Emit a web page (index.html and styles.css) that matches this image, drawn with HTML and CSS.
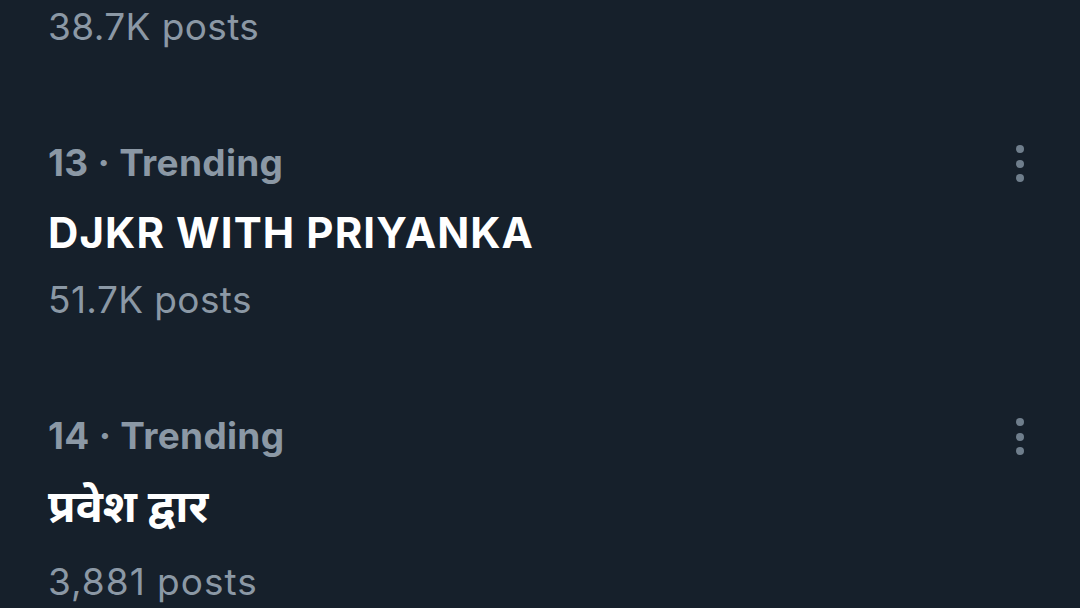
FILE: index.html
```html
<!DOCTYPE html>
<html lang="en">
<head>
<meta charset="utf-8">
<title>Trending</title>
<link rel="stylesheet" href="styles.css">
</head>
<body>
<div class="list">
  <div class="item item-partial">
    <div class="content">
      <div class="posts">38.7K posts</div>
    </div>
  </div>
  <div class="item">
    <div class="content">
      <div class="meta">13 · Trending</div>
      <div class="title">DJKR WITH PRIYANKA</div>
      <div class="posts">51.7K posts</div>
    </div>
    <div class="more"><span class="dot"></span><span class="dot"></span><span class="dot"></span></div>
  </div>
  <div class="item">
    <div class="content">
      <div class="meta">14 · Trending</div>
      <div class="title title-hi" lang="hi">प्रवेश द्वार</div>
      <div class="posts posts-wide">3,881 posts</div>
    </div>
    <div class="more"><span class="dot"></span><span class="dot"></span><span class="dot"></span></div>
  </div>
</div>
</body>
</html>
```

FILE: styles.css
```css
html, body {
  margin: 0;
  padding: 0;
  background: #16202b;
  height: 100%;
  overflow: hidden;
}
body {
  font-family: Inter, "Noto Sans", "Noto Sans Devanagari", sans-serif;
  color: #8b98a5;
}
.list {
  display: flex;
  flex-direction: column;
  padding: 3px 0 0 48px;
}
.item {
  display: flex;
  align-items: flex-start;
  justify-content: space-between;
  padding-top: 88px;
  padding-right: 56px;
}
.item-partial {
  padding-top: 0;
}
.content {
  display: flex;
  flex-direction: column;
}
.meta {
  font-size: 37px;
  font-weight: 700;
  letter-spacing: 0.3px;
  line-height: 48px;
  color: #8b98a5;
}
.title {
  font-size: 42px;
  font-weight: 700;
  letter-spacing: 1.1px;
  line-height: 52px;
  margin-top: 20px;
  color: #ffffff;
}
.title-hi {
  font-size: 45px;
  letter-spacing: 0;
  line-height: 58px;
  margin-top: 17px;
}
.title-hi + .posts {
  margin-top: 23px;
}
.posts {
  font-size: 37px;
  font-weight: 400;
  letter-spacing: 0.4px;
  line-height: 48px;
  margin-top: 17px;
  color: #8b98a5;
}
.posts-wide {
  letter-spacing: 1px;
}
.item-partial .posts {
  margin-top: 0;
}
.more {
  display: flex;
  flex-direction: column;
  align-items: center;
  gap: 6.5px;
  padding-top: 6px;
}
.dot {
  width: 8px;
  height: 8px;
  border-radius: 50%;
  background: #6f7e8c;
}
```
